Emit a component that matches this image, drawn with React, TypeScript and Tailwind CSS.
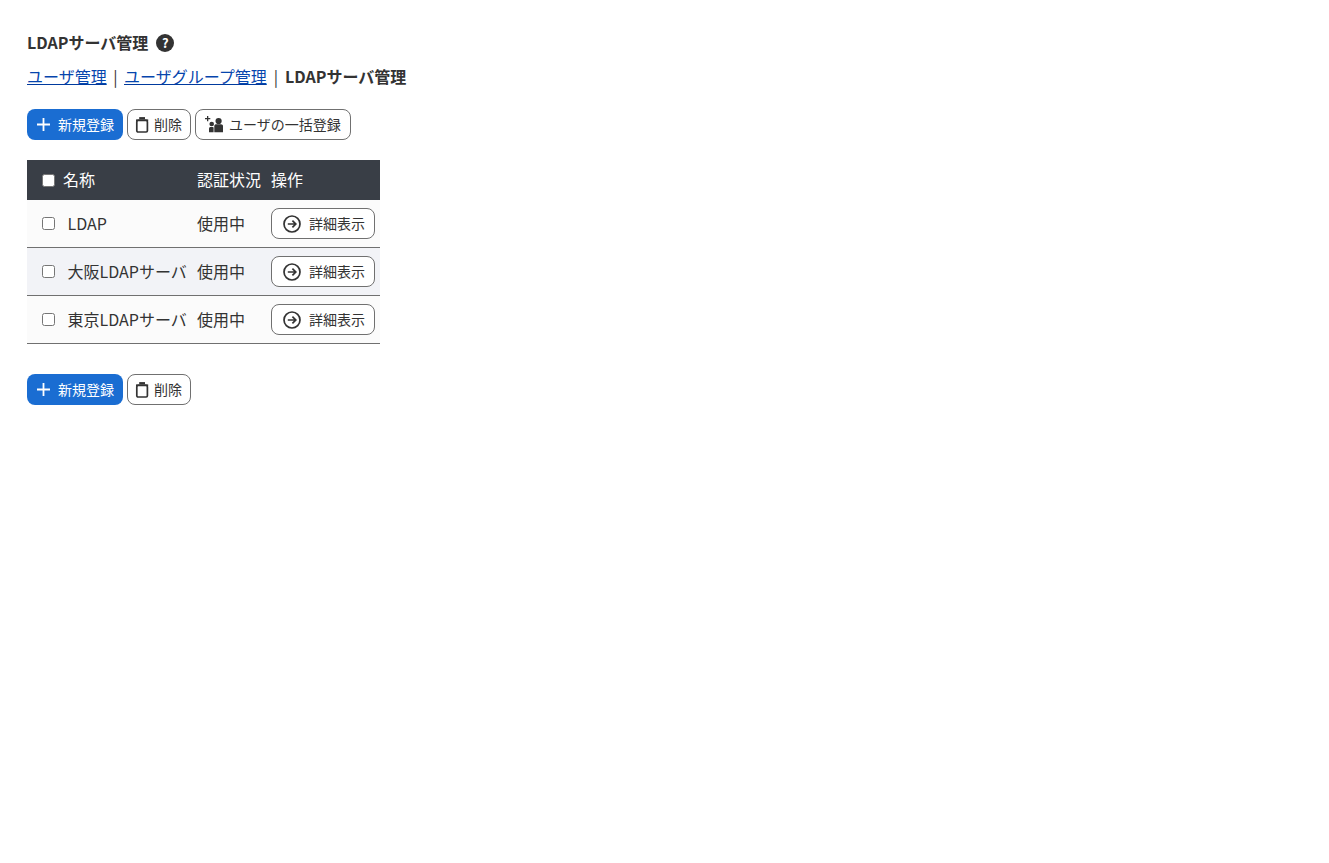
const Plus = () => (
  <svg width="13" height="13" viewBox="0 0 13 13" className="shrink-0" fill="none" stroke="#fff" strokeWidth="1.8">
    <path d="M6.5 0V13M0 6.5H13" />
  </svg>
);
const Trash = () => (
  <svg width="14" height="17" viewBox="0 0 14 17" className="shrink-0" fill="none" stroke="#333">
    <rect x="1.8" y="4.4" width="10.6" height="11.6" rx="1.3" strokeWidth="1.7" />
    <path d="M1 4.2H13.2" strokeWidth="1.6" />
    <path d="M4.2 2.2H10" strokeWidth="2.2" />
  </svg>
);
const Users = () => (
  <svg width="18" height="17" viewBox="0 0 18 17" className="shrink-0" fill="#333">
    <path d="M2 0h1.3v2h2v1.3h-2v2H2v-2H0V2h2z" />
    <circle cx="6.7" cy="8" r="2.3" />
    <circle cx="13.6" cy="5" r="3.1" />
    <path d="M4 16.2v-3.7c0-1 .7-1.6 1.5-1.6h2.2c.6 0 .9.3.9.8v4.5z" />
    <path d="M9.3 16.2V10c0-1.2 1-1.8 1.9-1.8h4.8c1.1 0 2 .7 2 1.8v6.2z" />
  </svg>
);
const ArrowCircle = () => (
  <svg width="18" height="18" viewBox="0 0 18 18" className="shrink-0" fill="none" stroke="#333" strokeWidth="1.7">
    <circle cx="9" cy="9" r="8" />
    <path d="M4.8 9H12.6M9.4 5.6L12.8 9L9.4 12.4" />
  </svg>
);
const Help = () => (
  <span className="w-[18px] h-[18px] rounded-full bg-[#333] text-white text-[13px] font-bold leading-[17px] text-center">?</span>
);

const NewBtn = () => (
  <button className="h-[31px] w-[96px] rounded-lg bg-[#1a6dd2] text-white text-[14px] flex items-center pl-[10px] gap-[8px]">
    <Plus />
    <span className="pb-[1px]">新規登録</span>
  </button>
);
const OutlineBtn = ({ className, children }: { className: string; children: React.ReactNode }) => (
  <button className={`h-[31px] rounded-lg border border-[#707070] bg-white text-[14px] text-[#333] flex items-center ${className}`}>
    {children}
  </button>
);
const DeleteBtn = () => (
  <OutlineBtn className="w-[64px] pl-[7px] gap-[5px]">
    <Trash />
    <span className="pb-[1px]">削除</span>
  </OutlineBtn>
);

const Checkbox = () => (
  <span className="w-[13px] h-[13px] rounded-[2.5px] shrink-0 bg-white border border-[#767676]" />
);

const rows = [
  { name: "LDAP", bg: "bg-[#fbfbfb]" },
  { name: "大阪LDAPサーバ", bg: "bg-[#f2f3f7]" },
  { name: "東京LDAPサーバ", bg: "bg-[#fbfbfb]" },
];

export default function App() {
  return (
    <div
      className="bg-white min-h-[863px] pl-[27px] pt-[30px] text-[#333] text-[16px]"
      style={{ fontFamily: '"Noto Sans CJK JP", "Noto Sans", sans-serif' }}
    >
      <div className="flex items-center gap-[8px] h-[26px] font-bold text-[16px]">
        <span className="pb-[3px]">LDAPサーバ管理</span>
        <Help />
      </div>
      <div className="flex items-center h-[24px] mt-[8px] leading-[24px]">
        <a className="underline text-[#0645ad] decoration-[#003a9e]">ユーザ管理</a>
        <span className="mx-[6.5px] text-[#333]">|</span>
        <a className="underline text-[#0645ad] decoration-[#003a9e]">ユーザグループ管理</a>
        <span className="mx-[7px] text-[#333]">|</span>
        <span className="font-bold">LDAPサーバ管理</span>
      </div>
      <div className="flex gap-[4px] mt-[21px]">
        <NewBtn />
        <DeleteBtn />
        <OutlineBtn className="w-[156px] pl-[9px] gap-[6px]">
          <Users />
          <span className="pb-[1px]">ユーザの一括登録</span>
        </OutlineBtn>
      </div>

      <div className="w-[353px] mt-[20px]">
        <div className="h-[40px] bg-[#393e46] text-white flex items-center">
          <div className="w-[170px] flex items-center pl-[15px] gap-[8px]">
            <Checkbox />
            <span className="pb-[2px]">名称</span>
          </div>
          <div className="w-[74px] pb-[2px]">認証状況</div>
          <div className="pb-[2px]">操作</div>
        </div>
        {rows.map((r) => (
          <div key={r.name} className={`h-[48px] ${r.bg} border-b border-[#707070] flex items-center`}>
            <div className="w-[170px] flex items-center pl-[15px] gap-[12.5px] whitespace-nowrap overflow-hidden">
              <Checkbox />
              <span className="pb-[2px]">{r.name}</span>
            </div>
            <div className="w-[74px] pb-[2px]">使用中</div>
            <OutlineBtn className="w-[104px] pl-[11px] gap-[8px]">
              <ArrowCircle />
              <span className="pb-[1px]">詳細表示</span>
            </OutlineBtn>
          </div>
        ))}
      </div>

      <div className="flex gap-[4px] mt-[30px]">
        <NewBtn />
        <DeleteBtn />
      </div>
    </div>
  );
}
